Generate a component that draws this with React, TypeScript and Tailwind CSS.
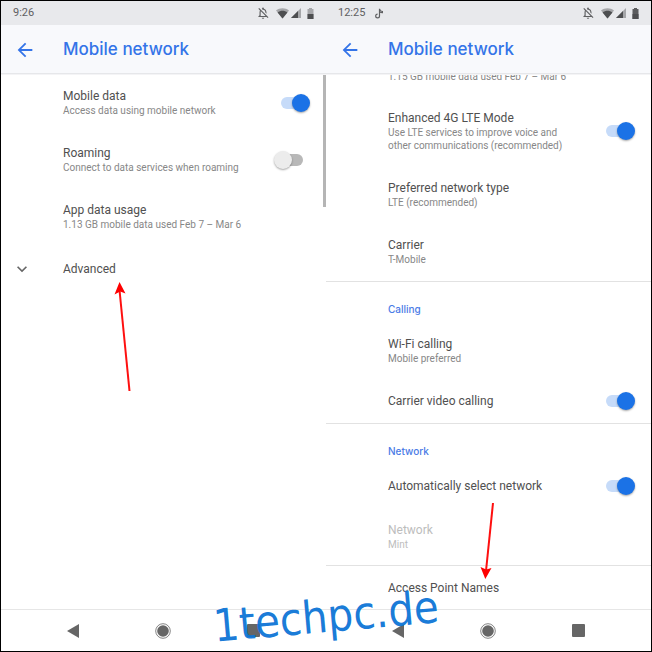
/**
 * Mobile network settings
 *
 * Two phone screens side by side: the top of the settings page and the
 * expanded advanced section, with arrows pointing at what to tap.
 */
import { useId } from 'react';
import type { ReactNode } from 'react';
import { MdArrowBack, MdExpandMore, MdOutlineNotificationsOff } from 'react-icons/md';

function WifiIcon() {
  return (
    <svg width="13" height="11" viewBox="0 0 13 11" aria-hidden="true">
      <path d="M0 2.6C3.6-.6 9.4-.6 13 2.6L6.5 10.4z" fill="#a5a6a9" />
      <path d="M1.6 4.4C4.4 2.2 8.6 2.2 11.4 4.4L6.5 10.4z" fill="#4d4e50" />
    </svg>
  );
}

function SignalIcon() {
  return (
    <svg width="10" height="10" viewBox="0 0 10 10" aria-hidden="true">
      <path d="M0 10L10 0V10z" fill="#a5a6a9" />
      <path d="M0 10L7 3V10z" fill="#4d4e50" />
    </svg>
  );
}

function BatteryIcon({ full }: { full?: boolean }) {
  return (
    <svg width="7" height="11" viewBox="0 0 7 11" aria-hidden="true">
      <path d="M2 0h3v1h1.5v10h-6V1H2z" fill={full ? '#5b5c5e' : '#a5a6a9'} />
      <path d="M.5 6h6v5h-6z" fill="#4d4e50" />
    </svg>
  );
}

function NoteIcon() {
  return (
    <svg width="8" height="11" viewBox="0 0 8 11" fill="none" stroke="#5f6062" strokeWidth="1.2" aria-hidden="true">
      <path d="M4.500 8V.8C4.900 2.500 5.900 3.400 7.500 3.600V4.700C6.300 4.700 5.300 4.300 4.500 3.700" />
      <path d="M4.500 8A1.900 1.900 0 1 1 2.600 6.100" />
    </svg>
  );
}

function StatusBar({ time, note, full }: { time: string; note?: boolean; full?: boolean }) {
  return (
    <div className="flex h-6 items-center bg-[#e8e9ec] px-3 text-[11px] text-[#5f6062]">
      <span>{time}</span>
      {note && <span className="ml-2.5"><NoteIcon /></span>}
      <span className="ml-auto flex items-center">
        <MdOutlineNotificationsOff size={14} className="mr-1.5" />
        <WifiIcon />
        <span className="ml-0.5"><SignalIcon /></span>
        <span className="ml-1.5"><BatteryIcon full={full} /></span>
      </span>
    </div>
  );
}

function Header() {
  return (
    <header className="relative z-10 flex h-12 items-center bg-[#f8f9fc] pt-px shadow-[0_1px_0_#e6e7ea,0_2px_0_#f4f4f6]">
      <button type="button" aria-label="Back" className="flex w-[62px] pl-[13px] text-[#3474e8]">
        <MdArrowBack size={22} />
      </button>
      <h1 className="font-[Inter,sans-serif] text-[17px] font-medium text-[#3474e8]">Mobile network</h1>
    </header>
  );
}

interface RowProps {
  title: string;
  summary?: string;
  checked?: boolean;
  disabled?: boolean;
  last?: boolean;
  icon?: ReactNode;
}

function Row({ title, summary, checked, disabled, last, icon }: RowProps) {
  const id = useId();
  const hasSwitch = checked !== undefined;
  const text = (
    <>
      <span className={`block text-xs leading-4 ${disabled ? 'text-[#bdbdbd]' : 'text-[#505050]'}`}>{title}</span>
      {summary && (
        <span className={`block text-[10px] leading-[13px] ${disabled ? 'text-[#bdbdbd]' : 'text-[#878787]'}`}>
          {summary}
        </span>
      )}
    </>
  );

  return (
    <li className={`flex items-center pt-3.5 pr-4 ${last ? 'pb-3' : 'pb-3.5'}`}>
      <span className="w-[62px] shrink-0 pl-[11px] text-[#666]">{icon}</span>
      {hasSwitch ? (
        <>
          <label htmlFor={id} className="min-w-0 flex-1 pr-5">{text}</label>
          <input
            id={id}
            type="checkbox"
            role="switch"
            defaultChecked={checked}
            className="relative -my-px h-[18px] w-9 shrink-0 appearance-none before:absolute before:top-[3px] before:left-[7px] before:h-3 before:w-[22px] before:rounded-full before:bg-[#b8b8b8] after:absolute after:top-0 after:left-0 after:size-[18px] after:rounded-full after:bg-[#ececec] after:shadow-[0_1px_2px_rgba(0,0,0,0.35)] checked:before:bg-[#c6dbf9] checked:after:left-[18px] checked:after:bg-[#1b72e6]"
          />
        </>
      ) : (
        <button type="button" disabled={disabled} className="min-w-0 flex-1 text-left">{text}</button>
      )}
    </li>
  );
}

function Category({ title, children }: { title: string; children: ReactNode }) {
  return (
    <section className="border-t border-[#e2e2e2]">
      <h2 className="pt-5 pb-1.5 pl-[62px] font-[Inter,sans-serif] text-[10px] leading-[14px] font-medium text-[#4a7be6]">
        {title}
      </h2>
      <ul>{children}</ul>
    </section>
  );
}

function NavBar() {
  return (
    <nav className="flex h-[42px] items-center justify-center gap-[66px] border-t border-[#e6e6e6] pr-px text-[#666]">
      <button type="button" aria-label="Back" className="flex size-6 items-center justify-center">
        <svg width="12" height="14" viewBox="0 0 12 14"><path d="M0 7L12 0V14z" fill="currentColor" /></svg>
      </button>
      <button type="button" aria-label="Home" className="flex size-6 items-center justify-center">
        <svg width="16" height="16" viewBox="0 0 16 16">
          <circle cx="8" cy="8" r="7.3" fill="none" stroke="currentColor" strokeWidth="0.8" />
          <circle cx="8" cy="8" r="5.8" fill="currentColor" />
        </svg>
      </button>
      <button type="button" aria-label="Recent apps" className="flex size-6 items-center justify-center">
        <span className="size-[13px] rounded-[1px] bg-current" />
      </button>
    </nav>
  );
}

export default function App() {
  return (
    <main className="relative flex min-h-screen overflow-hidden border border-black bg-white font-[Roboto,sans-serif]">
      <div className="relative flex flex-1 flex-col">
        <StatusBar time="9:26" />
        <Header />
        <div className="relative flex-1">
          <ul className="pt-px">
            <Row title="Mobile data" summary="Access data using mobile network" checked />
            <Row title="Roaming" summary="Connect to data services when roaming" checked={false} />
            <Row title="App data usage" summary="1.13 GB mobile data used Feb 7 – Mar 6" />
            <Row title="Advanced" icon={<MdExpandMore size={20} />} />
          </ul>
          <div className="absolute top-0 right-0 h-[134px] w-[3px] bg-[#b5b5b5]" />
          <svg className="absolute top-[209px] left-28" width="20" height="112" viewBox="0 0 20 112" aria-hidden="true">
            <path d="M6.500 8L16.500 109" stroke="#fe0f0f" strokeWidth="2" />
            <path d="M6.500 0L12.500 11.500L7.200 9.500L1.500 12.500z" fill="#fe0000" />
          </svg>
        </div>
        <NavBar />
      </div>

      <div className="relative flex flex-1 flex-col">
        <StatusBar time="12:25" note full />
        <Header />
        <div className="relative flex-1">
          {/* Tail of the app data usage row, scrolled under the header */}
          <div className="flex h-[23px] items-end overflow-hidden pb-[13px] pl-[62px] text-[10px] leading-[13px] text-[#878787]">
            1.15 GB mobile data used Feb 7 – Mar 6
          </div>
          <ul className="pb-px">
            <Row
              title="Enhanced 4G LTE Mode"
              summary="Use LTE services to improve voice and other communications (recommended)"
              checked
            />
            <Row title="Preferred network type" summary="LTE (recommended)" />
            <Row title="Carrier" summary="T-Mobile" />
          </ul>
          <Category title="Calling">
            <Row title="Wi-Fi calling" summary="Mobile preferred" />
            <Row title="Carrier video calling" checked />
          </Category>
          <Category title="Network">
            <Row title="Automatically select network" checked />
            <Row title="Network" summary="Mint" disabled />
          </Category>
          <ul className="border-t border-[#e2e2e2]">
            <Row title="Access Point Names" last />
          </ul>
          <svg className="absolute bottom-[30px] left-[152px]" width="20" height="76" viewBox="0 0 20 76" aria-hidden="true">
            <path d="M15 0L8 68" stroke="#fe0f0f" strokeWidth="2" />
            <path d="M7.300 76L2.500 64L8.200 66.500L13.500 65z" fill="#fe0000" />
          </svg>
        </div>
        <NavBar />
      </div>

      <div className="pointer-events-none absolute bottom-1.5 left-1/2 z-20 origin-center -translate-x-1/2 -rotate-5 font-['DejaVu_Sans_Condensed','DejaVu_Sans',sans-serif] text-[45px] leading-[56px] text-[#0c74d6]/95">
        1techpc.de
      </div>
    </main>
  );
}
